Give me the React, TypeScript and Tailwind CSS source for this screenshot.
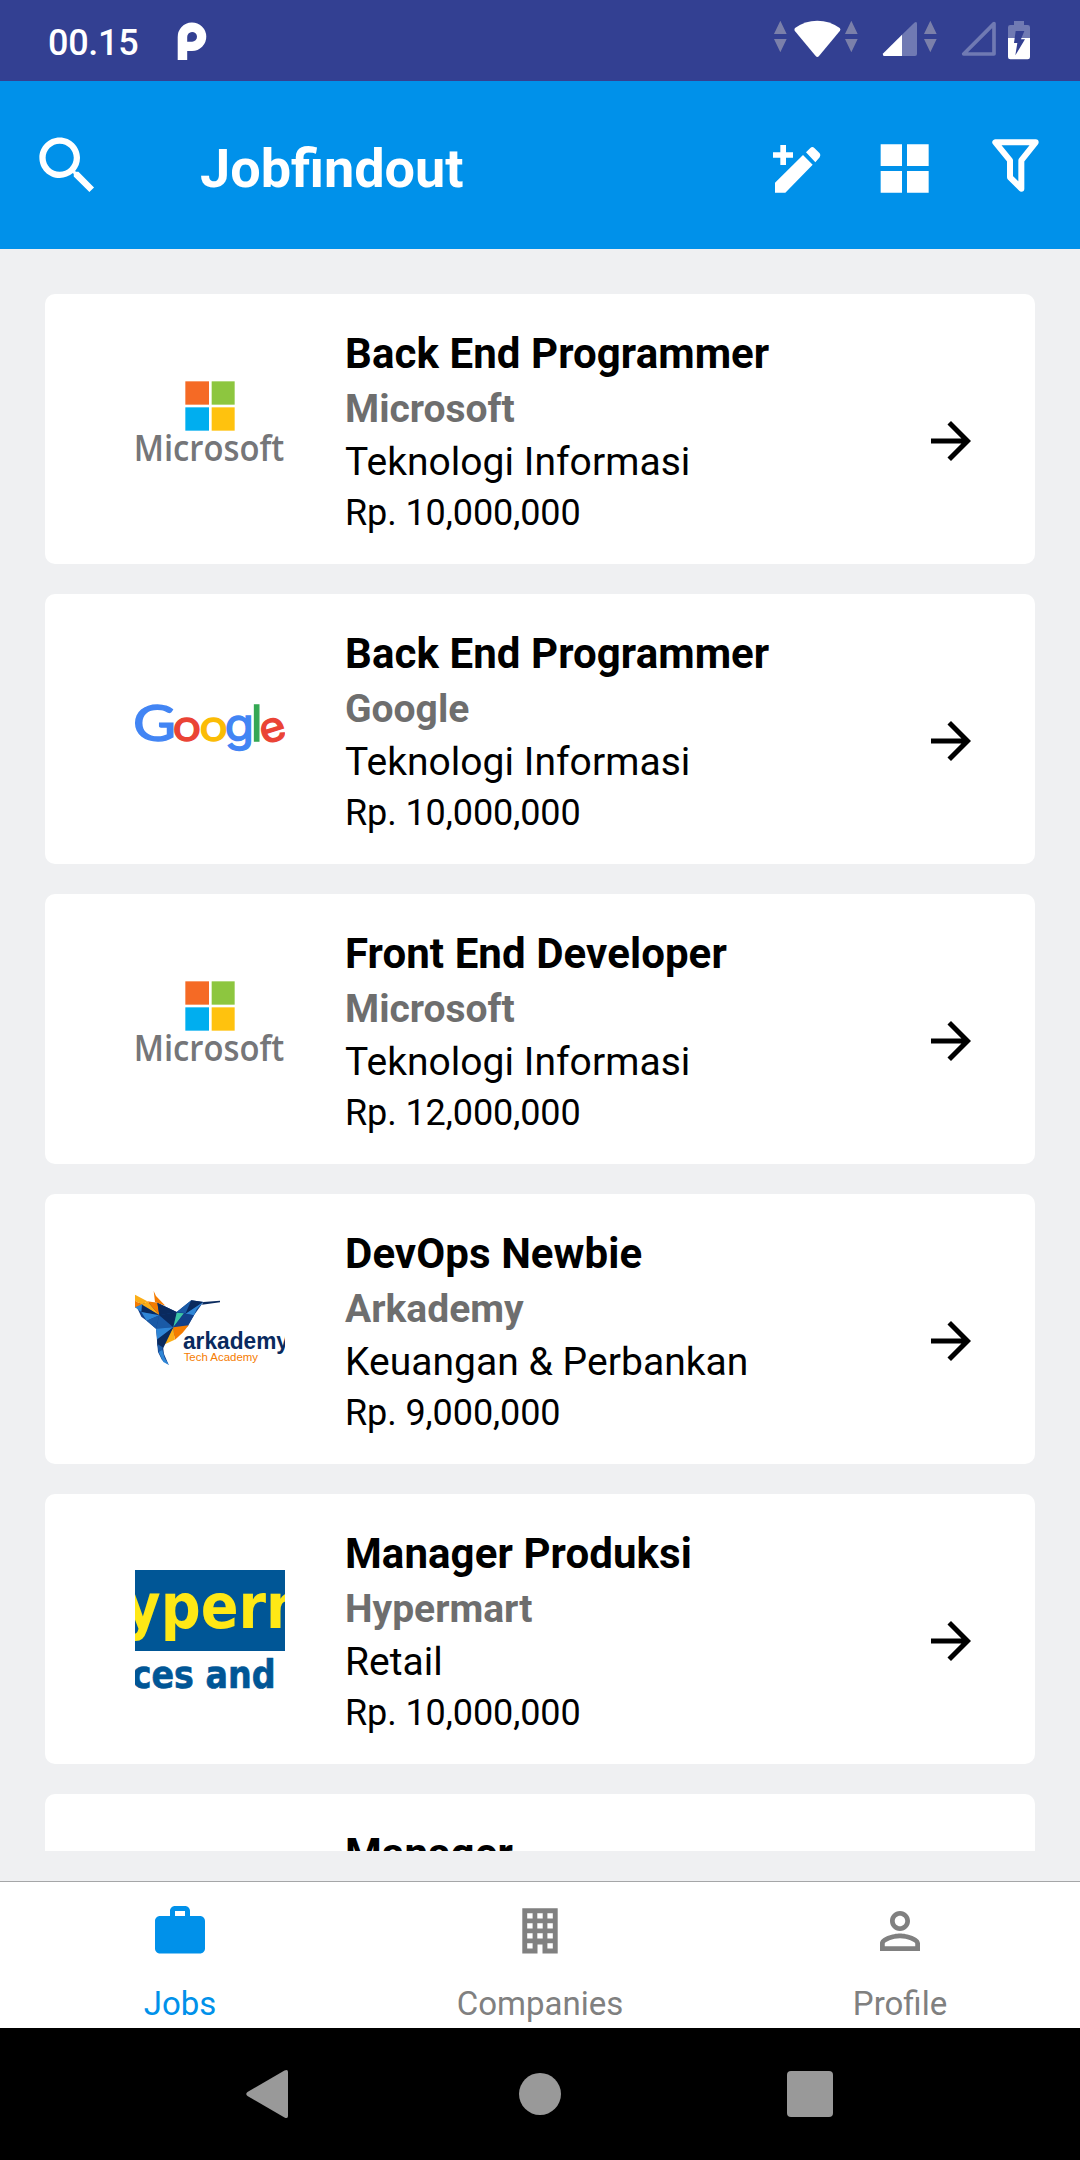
import React from "react";

type Company = "microsoft" | "google" | "arkademy" | "hypermart" | "none";

interface Job {
  title: string;
  company: string;
  category: string;
  salary: string;
  logo: Company;
}

const jobs: Job[] = [
  { title: "Back End Programmer", company: "Microsoft", category: "Teknologi Informasi", salary: "Rp. 10,000,000", logo: "microsoft" },
  { title: "Back End Programmer", company: "Google", category: "Teknologi Informasi", salary: "Rp. 10,000,000", logo: "google" },
  { title: "Front End Developer", company: "Microsoft", category: "Teknologi Informasi", salary: "Rp. 12,000,000", logo: "microsoft" },
  { title: "DevOps Newbie", company: "Arkademy", category: "Keuangan & Perbankan", salary: "Rp. 9,000,000", logo: "arkademy" },
  { title: "Manager Produksi", company: "Hypermart", category: "Retail", salary: "Rp. 10,000,000", logo: "hypermart" },
  { title: "Manager", company: "", category: "", salary: "", logo: "none" },
];

function MicrosoftLogo() {
  return (
    <svg viewBox="45 -18 450 450" className="size-[150px]">
      <rect x="196" y="64" width="71" height="70" fill="#f56a25" />
      <rect x="275" y="64" width="69" height="70" fill="#8dc63f" />
      <rect x="196" y="142" width="71" height="70" fill="#00aeef" />
      <rect x="275" y="142" width="69" height="70" fill="#ffc20e" />
      <text x="41" y="304" fontSize="108" fontWeight="600" textLength="452" lengthAdjust="spacingAndGlyphs" fill="#757679" className="font-['Open_Sans',sans-serif]">
        Microsoft
      </text>
    </svg>
  );
}

function GoogleLogo() {
  return (
    <svg viewBox="45 -78 450 450" className="size-[150px]">
      <text transform="translate(39 184) scale(1.18 1)" fontSize="150" strokeWidth="4" fill="#4285f4" stroke="#4285f4" className="font-['Lato',sans-serif]">
        G
      </text>
      <g fontSize="124" strokeWidth="4" className="font-['Inter',sans-serif]">
        <text transform="translate(157.400 184) scale(1.16 1)" fill="#ea4335" stroke="#ea4335">o</text>
        <text transform="translate(237.400 184) scale(1.16 1)" fill="#fbbc05" stroke="#fbbc05">o</text>
        <text transform="translate(314.500 184) scale(1.15 1.08)" fill="#4285f4" stroke="#4285f4">g</text>
        <text x="392.500" y="183" fontSize="147" fill="#34a853" stroke="#34a853">l</text>
        <text transform="rotate(-17 458 150) translate(419 184) scale(1.08 1)" fill="#ea4335" stroke="#ea4335">e</text>
      </g>
    </svg>
  );
}

function ArkademyLogo() {
  return (
    <svg viewBox="45 -48 450 450" className="size-[150px]">
      <polygon points="45,100 112,98 170,126 214,91 250,96 222,136 204,168 128,222 132,252 146,284 126,270 114,246 108,176 80,152 64,140" fill="#12408a" />
      <polygon points="45,74 82,94 66,104 45,92" fill="#fbae17" />
      <polygon points="45,92 66,104 45,114" fill="#f57c00" />
      <polygon points="45,112 66,103 90,120 64,126" fill="#2f86d6" />
      <polygon points="82,94 66,104 118,136" fill="#fbae17" />
      <polygon points="82,94 112,98 118,136" fill="#f57c00" />
      <polygon points="101,63 108,78 136,107 105,96" fill="#f57c00" />
      <polygon points="112,98 170,126 118,136" fill="#0a2a5e" />
      <polygon points="66,104 118,136 64,126" fill="#0a2a5e" />
      <polygon points="64,126 118,136 80,152" fill="#2f86d6" />
      <polygon points="118,136 80,152 108,176" fill="#1a5aa6" />
      <polygon points="118,136 108,176 160,172" fill="#1a5aa6" />
      <polygon points="118,136 170,126 160,172" fill="#0a2a5e" />
      <polygon points="170,126 214,91 200,130" fill="#1a5aa6" />
      <polygon points="214,91 250,96 196,132" fill="#0a2a5e" />
      <polygon points="250,96 230,118 222,136 196,132" fill="#2f86d6" />
      <polygon points="250,96 300,92 300,97 246,104" fill="#0a2a5e" />
      <polygon points="170,128 192,130 160,172" fill="#3cc4a4" />
      <polygon points="192,130 222,136 206,162 160,172" fill="#12408a" />
      <polygon points="160,172 206,166 188,188 164,210" fill="#f57c00" />
      <polygon points="160,172 164,209 128,226" fill="#fbae17" />
      <polygon points="108,176 160,172 112,210" fill="#2f86d6" />
      <polygon points="160,172 112,208 112,226 128,238" fill="#0a2a5e" />
      <polygon points="112,222 128,232 126,254 116,246" fill="#1a5aa6" />
      <polygon points="116,246 127,240 134,264 147,285 130,276" fill="#2f86d6" />
      <text x="189" y="236" fontSize="71" fontWeight="700" textLength="318" lengthAdjust="spacingAndGlyphs" fill="#0a2a5e" className="font-['Liberation_Sans',sans-serif]">
        arkademy
      </text>
      <text x="191" y="274" fontSize="34" textLength="223" lengthAdjust="spacingAndGlyphs" fill="#f57c00" className="font-['Liberation_Sans',sans-serif]">
        Tech Academy
      </text>
    </svg>
  );
}

function HypermartLogo() {
  return (
    <svg viewBox="45 12 450 450" className="size-[150px]">
      <rect x="45" y="60" width="450" height="243" fill="#005696" />
      <g fontWeight="700" className="font-['DejaVu_Sans',sans-serif]">
        <text transform="translate(13 234) scale(.9 1)" fontSize="186" fill="#ffe815">yperm</text>
        <text transform="translate(35 414) scale(.87 1)" fontSize="115" strokeWidth="2" fill="#005696" stroke="#005696">ces and</text>
      </g>
    </svg>
  );
}

function Logo({ name }: { name: Company }) {
  if (name === "microsoft") return <MicrosoftLogo />;
  if (name === "google") return <GoogleLogo />;
  if (name === "arkademy") return <ArkademyLogo />;
  if (name === "hypermart") return <HypermartLogo />;
  return null;
}

function StatusBar() {
  return (
    <div className="flex h-[81px] shrink-0 items-start bg-[#334092] pl-12 pr-[49px]">
      <span className="w-[129px] text-[36px] leading-[86px] font-medium tracking-[-0.3px] text-white">00.15</span>
      <svg viewBox="177 20 32 42" className="mt-5 h-[42px] w-8" fill="#fff" fillRule="evenodd">
        <path d="M177.7 60V37.2A14.3 14.3 0 1 1 192 51H187.2V60zM187.2 41.7V37A4.9 4.9 0 1 1 192 41.7z" />
      </svg>
      <div className="mt-5 ml-auto flex items-start">
        <svg viewBox="99 60 258 120" className="h-10 w-[86px]">
          <path d="M121 62l19 40h-38zM102 117h38l-19 40zM334 62l19 40h-38zM315 117h38l-19 40z" fill="#7b80aa" />
          <path d="M165 84Q195 62 232 62T299 84Q303 88 300 92L237 168Q232 174 227 168L164 92Q162 87 165 84z" fill="#fff" />
        </svg>
        <svg viewBox="426 60 168 120" className="ml-[23px] h-10 w-14">
          <path d="M486 104L523 68Q531 63 531 71V162Q531 168 525 168H486z" fill="#707ab3" />
          <path d="M486 104V168H433Q426 167 430 160z" fill="#fff" />
          <path d="M571 62l19 40h-38zM552 117h38l-19 40z" fill="#7b80aa" />
        </svg>
        <svg viewBox="663 60 111 120" className="ml-[23px] h-10 w-[37px]">
          <path d="M671 162L762 71V162z" fill="none" stroke="#707ab3" strokeWidth="11" strokeLinejoin="round" />
        </svg>
        <svg viewBox="801 60 72 120" className="ml-[9px] h-10 w-6">
          <path d="M804 114V82Q804 75 811 75H822V63H852V75H863Q870 75 870 82V114z" fill="#707ab3" />
          <path d="M804 114H870V171Q870 178 863 178H811Q804 178 804 171z" fill="#fff" />
          <path d="M827 93H853L843 118H855L826 166L832 129H822z" fill="#334092" />
        </svg>
      </div>
    </div>
  );
}

function Header() {
  return (
    <header className="flex h-[168px] shrink-0 items-center bg-[#0091ea] pr-10 pl-[30px] text-white">
      <svg viewBox="0 0 24 24" className="size-[75px]" fill="currentColor">
        <path d="M15.5 14h-.79l-.28-.27C15.41 12.59 16 11.11 16 9.5 16 5.91 13.09 3 9.5 3S3 5.91 3 9.5 5.91 16 9.5 16c1.61 0 3.09-.59 4.23-1.57l.27.28v.79l5 4.99L20.49 19l-4.99-5zm-6 0C7.01 14 5 11.99 5 9.5S7.01 5 9.5 5 14 7.01 14 9.5 11.99 14 9.5 14z" />
      </svg>
      <h1 className="mt-[7px] ml-[95px] text-[54px] leading-[64px] font-bold">Jobfindout</h1>
      <div className="ml-auto flex items-center">
        <svg viewBox="96 405 150 180" className="h-[60px] w-[50px]" fill="currentColor">
          <path d="M121 435h17v22h21v16h-21v22h-17v-22H99v-16h22zM105 548L189 465 218 494 136 578H105zM198 457L211 444Q217 438 223 444L239 460Q244 466 239 472L226 487z" />
        </svg>
        <svg viewBox="420 405 150 180" className="ml-[58px] h-[60px] w-[50px]" fill="currentColor">
          <path d="M422 433h64v65h-64zM501 433h65v65h-65zM422 513h64v65h-64zM501 513h65v65h-65z" />
        </svg>
        <svg viewBox="750 405 150 180" className="ml-[60px] h-[60px] w-[50px]" fill="none" stroke="currentColor" strokeWidth="18" strokeLinejoin="round">
          <path d="M766 427H887L844 481V566L810 532V481z" />
        </svg>
      </div>
    </header>
  );
}

function JobCard({ job }: { job: Job }) {
  return (
    <article className="flex h-[270px] shrink-0 rounded-[10px] bg-white pl-[90px]">
      <div className="mt-[60px] size-[150px] overflow-hidden">
        <Logo name={job.logo} />
      </div>
      <div className="ml-[60px] flex-1 pt-8 whitespace-nowrap text-black">
        <h2 className="text-[42px] leading-[56px] font-bold tracking-[0.08px]">{job.title}</h2>
        <p className="text-[39px] leading-[54px] font-bold text-[#6e6e6e]">{job.company}</p>
        <p className="text-[39px] leading-[52px] tracking-[0.04px]">{job.category}</p>
        <p className="text-[36px] leading-[50px] tracking-[-0.09px]">{job.salary}</p>
      </div>
      <svg viewBox="0 0 24 24" className="mt-[117px] mr-[54px] size-[60px]">
        <path d="M12 4l-1.41 1.41L16.17 11H4v2h12.17l-5.58 5.59L12 20l8-8z" />
      </svg>
    </article>
  );
}

function TabBar() {
  return (
    <nav className="grid h-[147px] shrink-0 grid-cols-3 border-t border-[#a5a6a8] bg-white text-center text-[33px] leading-[40px] text-[#808080]">
      <div className="flex flex-col items-center pt-[19px] text-[#0091ea]">
        <svg viewBox="0 0 24 24" className="size-[60px]" fill="currentColor">
          <path d="M20 6h-4V4c0-1.11-.89-2-2-2h-4c-1.11 0-2 .89-2 2v2H4c-1.11 0-1.99.89-1.99 2L2 19c0 1.11.89 2 2 2h16c1.11 0 2-.89 2-2V8c0-1.11-.89-2-2-2zm-6 0h-4V4h4v2z" />
        </svg>
        <span className="mt-[23px]">Jobs</span>
      </div>
      <div className="flex flex-col items-center pt-[19px]">
        <svg viewBox="0 0 60 60" className="size-[60px]" fill="currentColor" fillRule="evenodd">
          <path d="M12.300 7.300H47.700V52.500H32.500V43.500H27.500V52.500H12.300zM17.200 12.200h5.400v5.400h-5.400zM27.300 12.200h5.400v5.400h-5.400zM37.400 12.200h5.400v5.400h-5.400zM17.200 22.200h5.400v5.400h-5.400zM27.300 22.200h5.400v5.400h-5.400zM37.400 22.200h5.400v5.400h-5.400zM17.200 32.200h5.400v5.400h-5.400zM27.300 32.200h5.400v5.400h-5.400zM37.400 32.200h5.400v5.400h-5.400zM17.200 42.200h5.400v5.400h-5.400zM37.400 42.200h5.400v5.400h-5.400z" />
        </svg>
        <span className="mt-[23px]">Companies</span>
      </div>
      <div className="flex flex-col items-center pt-[19px]">
        <svg viewBox="0 0 24 24" className="size-[60px]" fill="currentColor">
          <path d="M12 5.900c1.160 0 2.100.94 2.100 2.100s-.94 2.100-2.100 2.100S9.900 9.160 9.900 8s.94-2.100 2.100-2.100m0 9c2.970 0 6.100 1.460 6.100 2.100v1.100H5.900V17c0-.64 3.130-2.100 6.100-2.100M12 4C9.790 4 8 5.790 8 8s1.790 4 4 4 4-1.790 4-4-1.790-4-4-4zm0 9c-2.670 0-8 1.340-8 4v3h16v-3c0-2.660-5.330-4-8-4z" />
        </svg>
        <span className="mt-[23px]">Profile</span>
      </div>
    </nav>
  );
}

function SystemNav() {
  return (
    <div className="flex h-[132px] shrink-0 items-center bg-black pl-[245px]">
      <svg viewBox="0 0 44 50" className="h-[50px] w-11" fill="#999">
        <path d="M39.500 1.500Q43 0 43 3V47Q43 50 39.500 48.500L2.500 27Q0 25 2.500 23z" />
      </svg>
      <div className="ml-[230px] size-[42px] rounded-full bg-[#999]" />
      <div className="ml-[226px] size-[46px] rounded-[4px] bg-[#999]" />
    </div>
  );
}

export default function App() {
  return (
    <div className="flex h-[2160px] w-[1080px] flex-col overflow-hidden bg-[#eff0f2] font-['Roboto',sans-serif]">
      <StatusBar />
      <Header />
      <main className="mx-[45px] mt-[45px] mb-[30px] flex min-h-0 flex-1 flex-col gap-[30px] overflow-hidden">
        {jobs.map((job, i) => (
          <JobCard key={i} job={job} />
        ))}
      </main>
      <TabBar />
      <SystemNav />
    </div>
  );
}
